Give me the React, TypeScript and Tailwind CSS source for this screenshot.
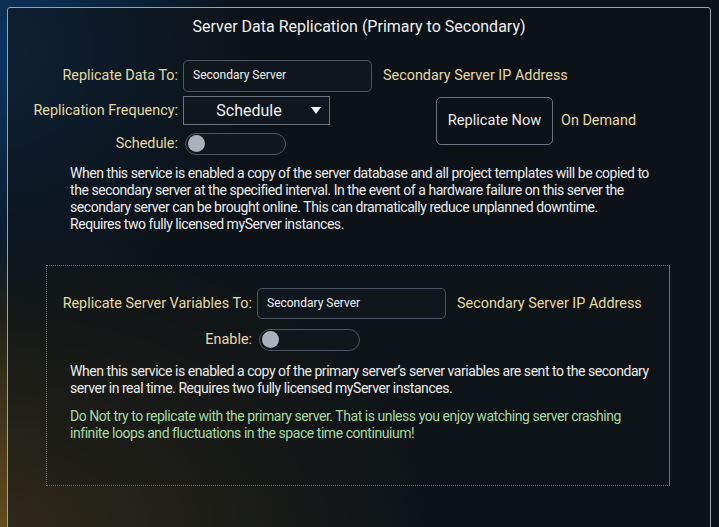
import React from 'react';

const label = "text-[14.4px] text-[#e6d9a2] text-right";
const note = "text-[14px] leading-[17px] tracking-[-0.45px]";

const Toggle: React.FC = () => (
    <div className="relative w-[101px] h-[22px] rounded-full border-[1.5px] border-[#4b5563] bg-[#12171d]">
        <div className="absolute left-[1.5px] top-[1px] w-[17px] h-[17px] rounded-full bg-[#aab1bd]" />
    </div>
);

const TextBox: React.FC<{ value: string; h: string }> = ({ value, h }) => (
    <div className={`w-[189px] ${h} rounded-[5px] border border-[#4b5563] bg-[#10161d] pl-[9px] pt-[5px] text-[12px] text-[#f1f1f1]`}>
        {value}
    </div>
);

const App: React.FC = () => {
    return (
        <div
            className="w-[719px] h-[527px] overflow-hidden pt-[7px] pl-[7px] pr-[8px] bg-[#0a1118] bg-[radial-gradient(ellipse_60%_55%_at_0%_100%,rgba(120,92,28,0.8),transparent),radial-gradient(ellipse_35%_50%_at_0%_10%,rgba(12,60,110,0.85),transparent)]"
            style={{ fontFamily: 'Roboto, "Liberation Sans", sans-serif' }}
        >
            <div className="h-[560px] rounded-t-[3px] border border-[#9aa3ab] bg-[rgba(14,19,24,0.62)]">
                <div className="pt-[9px] text-center text-[16px] leading-[20px] text-[#f0f0f0]">
                    Server Data Replication (Primary to Secondary)
                </div>

                {/* primary to secondary data */}
                <div className="mt-[23px] flex items-center">
                    <div className={`w-[170px] ${label}`}>Replicate Data To:</div>
                    <div className="ml-[5px]">
                        <TextBox value="Secondary Server" h="h-[32px]" />
                    </div>
                    <div className={`ml-[11px] ${label}`}>Secondary Server IP Address</div>
                </div>

                <div className="flex">
                    <div className="grid grid-cols-[170px_auto] gap-x-[5px] items-center">
                        <div className={`${label} mt-[4px]`}>Replication Frequency:</div>
                        <div className="mt-[4px] flex w-[147px] h-[29px] items-center border border-[#6b7280] bg-[#10161d] text-[16px] text-[#f1f1f1]">
                            <span className="flex-1 text-center pl-[3px]">Schedule</span>
                            <svg width="10" height="8" viewBox="0 0 10 8" className="mr-[8px]">
                                <polygon points="0,0 10,0 5,7" fill="#f1f1f1" />
                            </svg>
                        </div>
                        <div className={`${label} mt-[8px]`}>Schedule:</div>
                        <div className="mt-[8px] ml-[2px]">
                            <Toggle />
                        </div>
                    </div>
                    <div className="ml-[106px] mt-[5px] flex items-center h-[48px]">
                        <button className="w-[117px] h-[48px] rounded-[5px] border border-[#6b7280] text-[14.6px] text-[#ececec]">
                            Replicate Now
                        </button>
                        <span className={`ml-[8px] ${label}`}>On Demand</span>
                    </div>
                </div>

                <p className={`mt-[10px] pl-[62px] pr-[50px] ${note} text-[#ececec]`}>
                    When this service is enabled a copy of the server database and all project templates will be copied to the secondary server at the specified interval. In the event of a hardware failure on this server the secondary server can be brought online. This can dramatically reduce unplanned downtime.
                    <br />
                    Requires two fully licensed myServer instances.
                </p>

                {/* server variables */}
                <div className="mt-[32px] ml-[38px] w-[624px] h-[221px] border border-dotted border-[#6b7280] [border-right-style:solid] bg-[rgba(20,22,24,0.35)]">
                    <div className="mt-[22px] flex items-center">
                        <div className={`w-[205px] ${label}`}>Replicate Server Variables To:</div>
                        <div className="ml-[5px]">
                            <TextBox value="Secondary Server" h="h-[31px]" />
                        </div>
                        <div className={`ml-[11px] ${label}`}>Secondary Server IP Address</div>
                    </div>
                    <div className="mt-[10px] flex items-center">
                        <div className={`w-[205px] ${label}`}>Enable:</div>
                        <div className="ml-[7px]">
                            <Toggle />
                        </div>
                    </div>
                    <p className={`mt-[12px] pl-[23px] pr-[8px] ${note} text-[#ececec]`}>
                        When this service is enabled a copy of the primary server’s server variables are sent to the secondary server in real time. Requires two fully licensed myServer instances.
                    </p>
                    <p className={`mt-[11px] pl-[23px] pr-[30px] ${note} text-[#a5d9a3]`}>
                        Do Not try to replicate with the primary server. That is unless you enjoy watching server crashing infinite loops and fluctuations in the space time continuium!
                    </p>
                </div>
            </div>
        </div>
    );
};

export default App;
